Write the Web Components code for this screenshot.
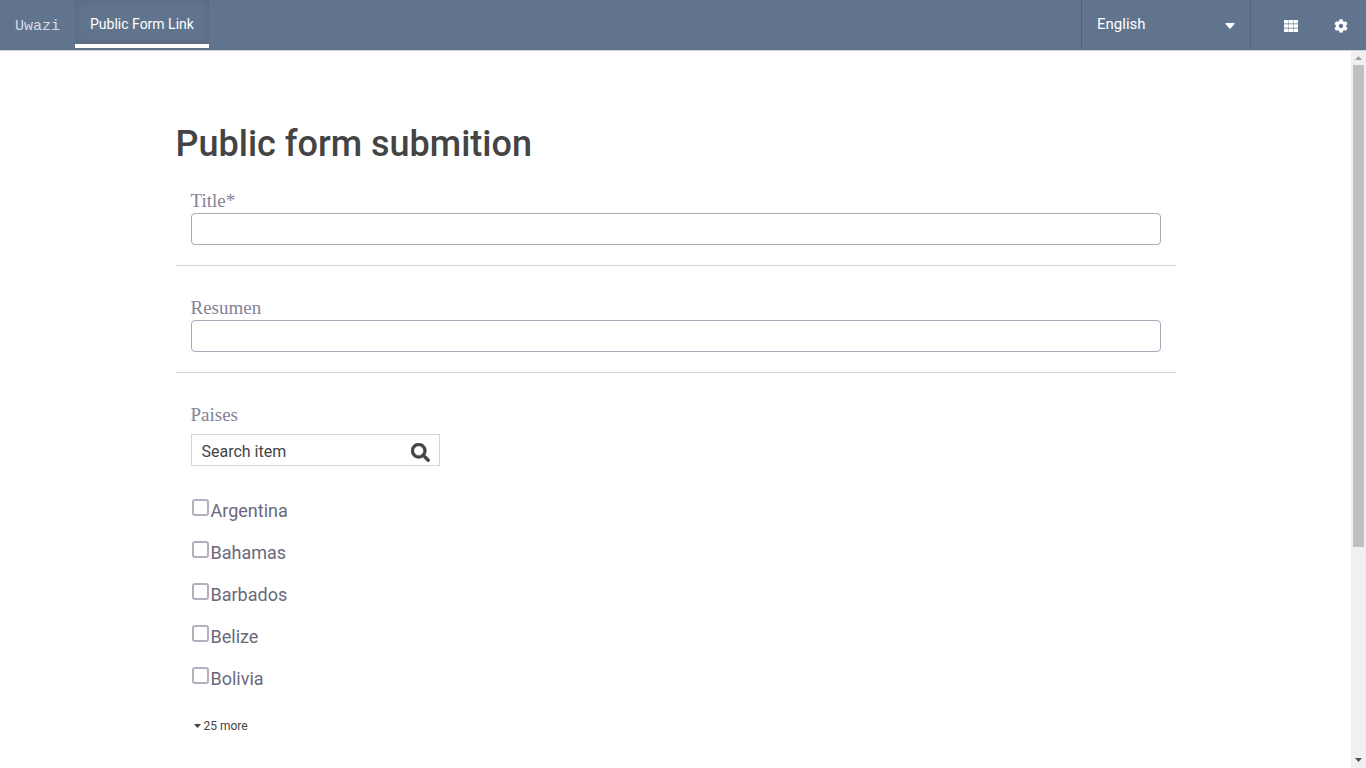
<!DOCTYPE html>
<html lang="en">
<head>
<meta charset="utf-8">
<meta name="viewport" content="width=device-width, initial-scale=1">
<title>Public form submition</title>
<style>
  html, body { margin: 0; height: 100%; }
  body { font-family: Roboto, "Liberation Sans", sans-serif; color: #444; background: #fff; overflow: hidden; }
</style>
</head>
<body>
<uwazi-app>
  <nav-bar slot="header"></nav-bar>
  <public-form heading="Public form submition">
    <text-field label="Title" required></text-field>
    <text-field label="Resumen"></text-field>
    <multi-select label="Paises" more="25 more">
      <check-option>Argentina</check-option>
      <check-option>Bahamas</check-option>
      <check-option>Barbados</check-option>
      <check-option>Belize</check-option>
      <check-option>Bolivia</check-option>
    </multi-select>
  </public-form>
</uwazi-app>

<script>
class BaseElement extends HTMLElement {
  constructor() {
    super();
    this.attachShadow({ mode: 'open' });
  }
  connectedCallback() {
    this.shadowRoot.innerHTML = '<style>*{box-sizing:border-box}</style>' + this.render();
  }
}

customElements.define('uwazi-app', class extends BaseElement {
  render() {
    return `<style>
      :host { display: flex; flex-direction: column; height: 100vh; }
      .body { display: flex; flex: 1; min-height: 0; }
      main { flex: 1; min-width: 0; overflow: hidden; }
    </style>
    <slot name="header"></slot>
    <div class="body"><main><slot></slot></main><scroll-rail></scroll-rail></div>`;
  }
});

customElements.define('nav-bar', class extends BaseElement {
  render() {
    return `<style>
      :host { display: block; flex: none; background: #61748d; border-bottom: 1px solid #d0d2d8; color: #fff; }
      header { display: flex; height: 50px; }
      a { color: inherit; text-decoration: none; }
      .brand { padding: 2px 15px 0; font: 15px/50px "Liberation Mono", monospace; color: #d6dbe2; }
      .tab { height: 48px; padding: 0 15px; font-size: 14px; line-height: 48px; border-bottom: 4px solid #fff;
        box-shadow: inset 0 0 8px rgba(0,0,0,.12); }
      .lang { position: relative; margin-left: auto; width: 170px; border: solid #566373; border-width: 0 1px; }
      select { appearance: none; width: 100%; height: 48px; padding: 0 15px; border: 0; background: none;
        color: inherit; font: 15px Roboto, sans-serif; }
      option { color: #444; }
      .lang svg { position: absolute; right: 15px; top: 23px; pointer-events: none; }
      .icons { display: flex; padding-left: 15px; }
      .icons a { display: flex; width: 50px; align-items: center; justify-content: center; padding-top: 2px; }
      svg { display: block; fill: #fff; }
    </style>
    <header>
      <a class="brand" href="#">Uwazi</a>
      <a class="tab" href="#form">Public Form Link</a>
      <div class="lang">
        <select aria-label="Language"><option>English</option></select>
        <svg width="10" height="6" viewBox="0 0 10 6"><path d="M1 0h8q1 0 .5 1L5.500 5.500q-.5.5-1 0L.5 1Q0 0 1 0z"/></svg>
      </div>
      <nav class="icons">
        <a href="#library" aria-label="Library"><svg width="14" height="12" viewBox="0 0 14 12"><path d="M0 0h4.400v3.600H0zM4.800 0h4.400v3.600H4.800zM9.600 0H14v3.600H9.600zM0 4.200h4.400v3.600H0zM4.800 4.200h4.400v3.600H4.800zM9.600 4.200H14v3.600H9.600zM0 8.400h4.400V12H0zM4.800 8.400h4.400V12H4.800zM9.600 8.400H14V12H9.600z"/></svg></a>
        <a href="#settings" aria-label="Settings"><svg width="14" height="14" viewBox="0 0 512 512"><path d="M487.400 315.700l-42.600-24.600c4.300-23.200 4.300-47 0-70.200l42.600-24.600c4.900-2.800 7.100-8.600 5.500-14-11.100-35.600-30-67.800-54.700-94.600-3.800-4.100-10-5.100-14.800-2.300L380.800 110c-17.900-15.400-38.500-27.300-60.800-35.100V25.800c0-5.600-3.900-10.500-9.400-11.700-36.700-8.200-74.300-7.800-109.200 0-5.500 1.200-9.400 6.100-9.400 11.700V75c-22.200 7.900-42.800 19.800-60.800 35.100L88.700 85.500c-4.900-2.800-11-1.900-14.800 2.300-24.700 26.700-43.600 58.900-54.700 94.600-1.700 5.400.6 11.200 5.500 14L67.300 221c-4.300 23.200-4.300 47 0 70.200l-42.600 24.600c-4.900 2.800-7.100 8.600-5.500 14 11.100 35.600 30 67.800 54.700 94.600 3.800 4.100 10 5.100 14.800 2.300l42.600-24.600c17.900 15.400 38.500 27.300 60.800 35.100v49.200c0 5.600 3.900 10.500 9.400 11.700 36.700 8.200 74.300 7.800 109.200 0 5.500-1.200 9.400-6.100 9.400-11.700v-49.200c22.200-7.900 42.800-19.800 60.800-35.100l42.600 24.600c4.900 2.800 11 1.900 14.800-2.300 24.700-26.700 43.600-58.900 54.700-94.600 1.500-5.500-.7-11.300-5.600-14.100zM256 336c-44.100 0-80-35.900-80-80s35.900-80 80-80 80 35.900 80 80-35.900 80-80 80z"/></svg></a>
      </nav>
    </header>`;
  }
});

customElements.define('scroll-rail', class extends BaseElement {
  render() {
    return `<style>
      :host { display: flex; flex-direction: column; flex: none; width: 15px; background: #f0f0f0; }
      .track { flex: 1; padding: 0 2px; }
      .thumb { height: 70%; background: #c0c0c0; }
      svg { display: block; flex: none; }
    </style>
    <svg width="15" height="14" viewBox="0 0 15 14"><path fill="#a0a0a0" d="M4 9h7L7.500 5z"/></svg>
    <div class="track"><div class="thumb"></div></div>
    <svg width="15" height="15" viewBox="0 0 15 15"><path fill="#505050" d="M4 5h7L7.500 9z"/></svg>`;
  }
});

customElements.define('public-form', class extends BaseElement {
  render() {
    return `<style>
      :host { display: block; max-width: 1000px; margin: 0 auto; padding-top: 73px; }
      h1 { margin: 0 0 25px; font-size: 36px; line-height: 40px; font-weight: 500; color: #444; }
      form { display: flex; flex-direction: column; gap: 30px; }
    </style>
    <h1>${this.getAttribute('heading')}</h1>
    <form><slot></slot></form>`;
  }
});

customElements.define('text-field', class extends BaseElement {
  render() {
    const required = this.hasAttribute('required');
    return `<style>
      :host { display: block; padding: 0 15px 20px; border-bottom: 1px solid #d5d5d8; }
      label { display: block; font: 19px/24px "Liberation Serif", serif; color: #858396; }
      input { display: block; width: 100%; height: 32px; padding: 0 10px; border: 1px solid #a9a8b8; border-radius: 4px;
        background: #fff; color: #444; font: 16px Roboto, sans-serif; }
    </style>
    <label for="value">${this.getAttribute('label')}${required ? '*' : ''}</label>
    <input id="value" type="text">`;
  }
});

customElements.define('multi-select', class extends BaseElement {
  render() {
    return `<style>
      :host { display: block; padding: 0 15px; }
      label { display: block; margin-bottom: 7px; font: 19px/24px "Liberation Serif", serif; color: #858396; }
      .search { position: relative; width: 249px; margin-bottom: 24px; }
      input { display: block; width: 100%; height: 32px; padding: 2px 40px 0 10px; border: 1px solid #d5d5dc; border-radius: 0;
        background: #fff; color: #444; font: 16px Roboto, sans-serif; }
      input::placeholder { color: #444; opacity: 1; }
      .search svg { position: absolute; right: 10px; top: 9px; }
      .more { display: flex; align-items: center; gap: 3px; margin-top: 16px; padding: 0 3px; border: 0; background: none;
        color: #444; font: 12px/20px Roboto, sans-serif; }
    </style>
    <label for="search">${this.getAttribute('label')}</label>
    <div class="search">
      <input id="search" type="text" placeholder="Search item">
      <svg width="19" height="19" viewBox="0 0 512 512" fill="#444" stroke="#444" stroke-width="10"><path d="M505 442.700L405.300 343c-4.500-4.500-10.600-7-17-7H372c27.600-35.300 44-79.700 44-128C416 93.100 322.900 0 208 0S0 93.100 0 208s93.100 208 208 208c48.300 0 92.700-16.400 128-44v16.300c0 6.400 2.500 12.500 7 17l99.700 99.700c9.400 9.400 24.600 9.400 33.900 0l28.300-28.300c9.400-9.400 9.400-24.600.1-34zM208 336c-70.700 0-128-57.200-128-128 0-70.700 57.200-128 128-128 70.700 0 128 57.200 128 128 0 70.700-57.200 128-128 128z"/></svg>
    </div>
    <slot></slot>
    <button class="more" type="button"><svg width="7" height="4" viewBox="0 0 7 4" fill="#444"><path d="M0 0h7L3.500 4z"/></svg>${this.getAttribute('more')}</button>`;
  }
});

customElements.define('check-option', class extends BaseElement {
  render() {
    return `<style>
      :host { display: block; }
      label { display: flex; align-items: center; gap: 2px; height: 42px; padding-left: 1px; font-size: 18px; line-height: 24px; color: #6b687b; }
      input { appearance: none; flex: none; width: 17px; height: 17px; margin: 0 0 7px; border: 2px solid #b1b0bd; border-radius: 3px; background: #fff; }
      input:checked { background: #6b687b; }
    </style>
    <label><input type="checkbox"><slot></slot></label>`;
  }
});
</script>
</body>
</html>
